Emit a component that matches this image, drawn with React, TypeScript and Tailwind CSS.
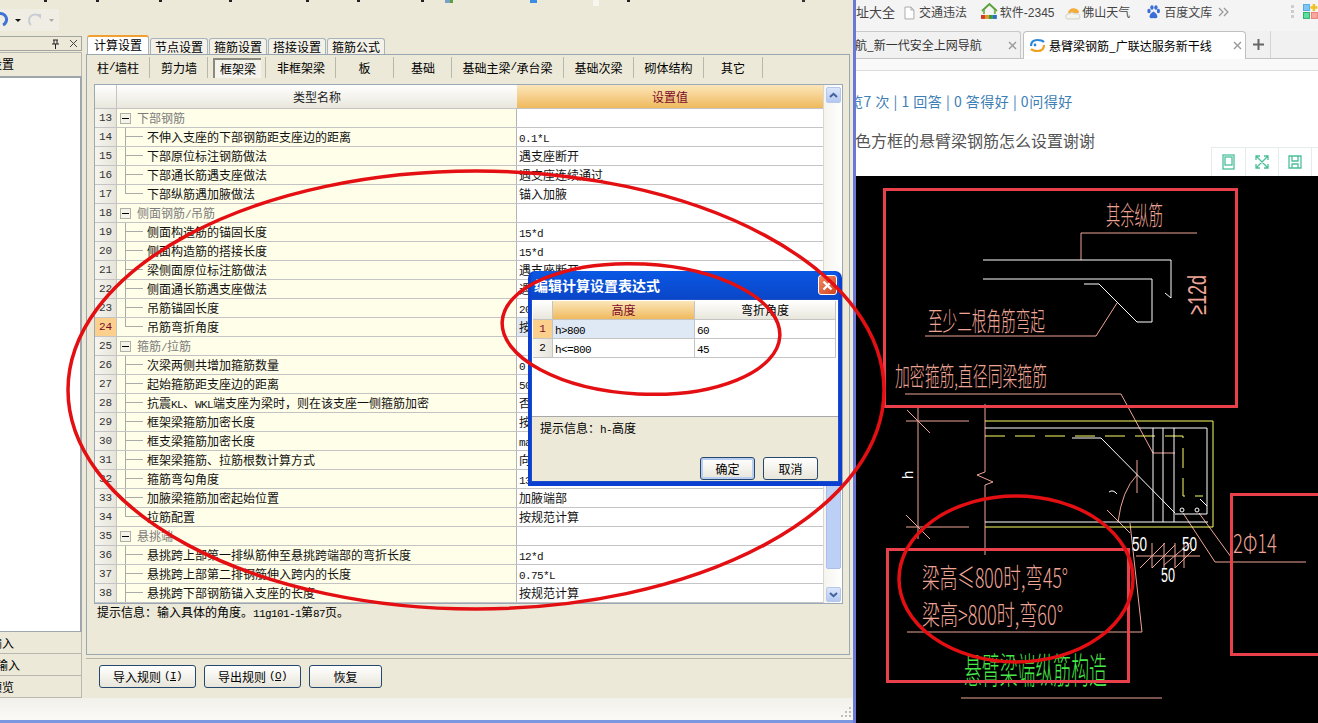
import React from "react";

type Row = [number, "g" | "c" | "l", string, string?];

const rows: Row[] = [
  [13, "g", "下部钢筋"],
  [14, "c", "不伸入支座的下部钢筋距支座边的距离", "0.1*L"],
  [15, "c", "下部原位标注钢筋做法", "遇支座断开"],
  [16, "c", "下部通长筋遇支座做法", "遇支座连续通过"],
  [17, "l", "下部纵筋遇加腋做法", "锚入加腋"],
  [18, "g", "侧面钢筋/吊筋"],
  [19, "c", "侧面构造筋的锚固长度", "15*d"],
  [20, "c", "侧面构造筋的搭接长度", "15*d"],
  [21, "c", "梁侧面原位标注筋做法", "遇支座断开"],
  [22, "c", "侧面通长筋遇支座做法", "遇支座连续通过"],
  [23, "c", "吊筋锚固长度", "20*d"],
  [24, "l", "吊筋弯折角度", "按规范计算"],
  [25, "g", "箍筋/拉筋"],
  [26, "c", "次梁两侧共增加箍筋数量", "0"],
  [27, "c", "起始箍筋距支座边的距离", "50"],
  [28, "c", "抗震KL、WKL端支座为梁时，则在该支座一侧箍筋加密", "否"],
  [29, "c", "框架梁箍筋加密长度", "按规范计算"],
  [30, "c", "框支梁箍筋加密长度", "max(hb,500)"],
  [31, "c", "框架梁箍筋、拉筋根数计算方式", "向上取整+1"],
  [32, "c", "箍筋弯勾角度", "135"],
  [33, "c", "加腋梁箍筋加密起始位置", "加腋端部"],
  [34, "l", "拉筋配置", "按规范计算"],
  [35, "g", "悬挑端"],
  [36, "c", "悬挑跨上部第一排纵筋伸至悬挑跨端部的弯折长度", "12*d"],
  [37, "c", "悬挑跨上部第二排钢筋伸入跨内的长度", "0.75*L"],
  [38, "c", "悬挑跨下部钢筋锚入支座的长度", "按规范计算"],
];

function mix(text: string) {
  return text.split(/([\x21-\x7e]+)/).map((part, i) =>
    /^[\x21-\x7e]+$/.test(part) ? (
      <span key={i} className="font-['Liberation_Mono',monospace] text-[11px] tracking-[-0.6px]">
        {part}
      </span>
    ) : (
      <span key={i}>{part}</span>
    )
  );
}

const ticks = ["ml-[44px]", "ml-[49px]", "ml-[60px]", "ml-[67px]", "ml-[74px]", "ml-[48px]", "ml-[61px]"];

function XpButton({ className, children }: { className: string; children: React.ReactNode }) {
  return (
    <div
      className={
        "h-[23px] rounded-[3px] border border-[#24486f] bg-gradient-to-b from-white to-[#e8e6da] flex items-center justify-center text-[12px] text-black " +
        className
      }
    >
      {children}
    </div>
  );
}

function Grid() {
  return (
    <div className="ml-[7px] mt-[6px] w-[749px] h-[520px] border border-[#9aa9b5] flex bg-white">
      <div className="w-[728px] flex flex-col">
        <div className="h-[24px] flex shrink-0 border-b border-[#c4c4c4] text-[12px]">
          <div className="w-[22px] bg-gradient-to-b from-white to-[#e9e7dc] border-r border-[#c4c4c4]" />
          <div className="w-[400px] bg-gradient-to-b from-white to-[#e9e7dc] flex items-center justify-center text-[#222]">类型名称</div>
          <div className="flex-1 bg-gradient-to-b from-[#fbe6b8] to-[#efb95b] flex items-center justify-center text-[#7a0a2a]">设置值</div>
        </div>
        {rows.map(([n, kind, name, value]) => (
          <div key={n} className="h-[19px] flex shrink-0 border-b border-[#c4c4c4] text-[12px] leading-[18px] text-[#111]">
            <div
              className={
                n === 24
                  ? "w-[22px] bg-[#fbd08c] border-r border-[#c4c4c4] text-center font-['Liberation_Mono',monospace] text-[11px] text-[#7a0a2a]"
                  : "w-[22px] bg-gradient-to-r from-[#f6f5ef] to-[#e6e4da] border-r border-[#c4c4c4] text-center font-['Liberation_Mono',monospace] text-[11px] text-[#333]"
              }
            >
              {n}
            </div>
            <div className="w-[400px] bg-[#fffee8] border-r border-[#b4b4b4] flex items-stretch whitespace-nowrap">
              {kind === "g" ? (
                <>
                  <div className="ml-[3px] mt-[4px] w-[11px] h-[11px] border border-[#b0b0a8] bg-[#f4f3ea] flex items-center justify-center shrink-0">
                    <div className="w-[7px] h-[1px] bg-black" />
                  </div>
                  <div className="ml-[6px] text-[#7c7c7c]">{mix(name)}</div>
                </>
              ) : (
                <>
                  <div className="ml-[8px] w-[18px] flex flex-col shrink-0">
                    <div className="h-[9px] border-l border-b border-[#aaa]" />
                    <div className={kind === "l" ? "flex-1" : "flex-1 border-l border-[#aaa]"} />
                  </div>
                  <div className="ml-[4px]">{mix(name)}</div>
                </>
              )}
            </div>
            <div className={n === 24 ? "flex-1 bg-[#dfe8f5] pl-[2px] whitespace-nowrap" : "flex-1 bg-white pl-[2px] whitespace-nowrap"}>
              {value ? mix(value) : null}
            </div>
          </div>
        ))}
      </div>
      <div className="w-[19px] border-l border-[#d8d8d0] bg-gradient-to-r from-[#f5f4ee] to-white flex flex-col items-center pt-[2px] pb-[1px]">
        <div className="w-[15px] h-[16px] rounded-[2px] border border-[#b6c7ea] bg-gradient-to-b from-[#dbe6fb] to-[#b4c8f0] flex items-center justify-center">
          <svg width="9" height="7" viewBox="0 0 9 7">
            <path d="M1 5 L4.5 1.8 L8 5" fill="none" stroke="#43609c" strokeWidth="2" />
          </svg>
        </div>
        <div className="flex-1 w-full" />
        <div className="w-[15px] h-[270px] rounded-[2px] border border-[#a9bfea] bg-[#bcd0f6]" />
        <div className="h-[18px]" />
        <div className="w-[15px] h-[15px] rounded-[2px] border border-[#b6c7ea] bg-gradient-to-b from-[#dbe6fb] to-[#b4c8f0] flex items-center justify-center">
          <svg width="9" height="7" viewBox="0 0 9 7">
            <path d="M1 2 L4.5 5.2 L8 2" fill="none" stroke="#43609c" strokeWidth="2" />
          </svg>
        </div>
      </div>
    </div>
  );
}

function LeftApp() {
  return (
    <div className="w-[853px] h-[723px] bg-[#ece9d8] flex flex-col shrink-0">
      <div className="h-[36px] shrink-0 flex flex-col">
        <div className="h-[3px] flex">
          {ticks.map((t) => (
            <div key={t} className={t + " w-[3px] h-[2px] bg-[#222]"} />
          ))}
          <div className="ml-[21px] w-[5px] h-[3px] bg-[#7aa0c8]" />
          <div className="w-[3px] h-[3px] bg-[#58a040]" />
          <div className="ml-[77px] w-[7px] h-[3px] bg-[#3a8de0]" />
          <div className="ml-[56px] w-[6px] h-[6px] bg-[#f6f5ee]" />
          <div className="ml-[28px] w-[3px] h-[2px] bg-[#222]" />
          <div className="ml-[172px] w-[3px] h-[2px] bg-[#333]" />
        </div>
        <div className="mt-[6px] w-[59px] h-[22px] bg-[#f0eee4] flex items-center">
          <svg width="58" height="22" viewBox="0 0 58 22">
            <path d="M-2 5 A 6 6 0 0 1 3 16" fill="none" stroke="#3f74d6" strokeWidth="3" />
            <path d="M15 10 h6 l-3 3 z" fill="#111" />
            <path d="M39 7 A 6 6 0 1 0 31 16" fill="none" stroke="#c9cdd3" strokeWidth="2" />
            <path d="M36 5 h5 v5 z" fill="#c9cdd3" />
            <path d="M49 10 h5 l-2.500 3 z" fill="#aaa" />
          </svg>
        </div>
      </div>
      <div className="flex-1 flex min-h-0">
        <div className="w-[82px] flex flex-col shrink-0 text-[12px] text-black overflow-hidden">
          <div className="h-[15px] border-t border-r border-b border-[#a4a4a0] flex items-center justify-end pr-[3px] gap-[9px]">
            <svg width="9" height="10" viewBox="0 0 9 10">
              <path d="M2 1 h5 M3 1 v4 M6 1 v4 M1 5 h7 M4.500 5 v5" stroke="#222" strokeWidth="1" fill="none" />
            </svg>
            <svg width="9" height="9" viewBox="0 0 9 9">
              <path d="M1 1 L8 8 M8 1 L1 8" stroke="#444" strokeWidth="1" />
            </svg>
          </div>
          <div className="mt-[1px] h-[24px] border-t border-r border-[#b8b8b0] flex items-center overflow-hidden">
            <span className="-ml-[10px] -mt-[1px] whitespace-nowrap">设置</span>
          </div>
          <div className="h-[556px] bg-white border-t-2 border-r-2 border-b border-[#9fa6ac]" />
          <div className="h-[22px] border-r border-b border-[#b8b8b0] flex items-center overflow-hidden">
            <span className="-ml-[10px] whitespace-nowrap">输入</span>
          </div>
          <div className="h-[22px] border-r border-b border-[#b8b8b0] flex items-center overflow-hidden">
            <span className="-ml-[4px] whitespace-nowrap">输入</span>
          </div>
          <div className="h-[22px] border-r border-b border-[#b8b8b0] flex items-center overflow-hidden">
            <span className="-ml-[10px] whitespace-nowrap">预览</span>
          </div>
        </div>
        <div className="ml-[4px] w-[765px] flex flex-col shrink-0 text-[12px] text-black">
          <div className="h-[18px] flex items-end pl-[1px] gap-[1px] shrink-0">
            <div className="w-[62px] h-[19px] bg-white border-t-2 border-t-[#f0a030] border-x border-x-[#a8b4bc] rounded-t-[3px] text-center leading-[15px]">计算设置</div>
            {["节点设置", "箍筋设置", "搭接设置", "箍筋公式"].map((t) => (
              <div key={t} className="w-[58px] h-[16px] bg-[#f3f1e8] border-t border-x border-[#a8b4bc] rounded-t-[3px] text-center leading-[16px]">
                {t}
              </div>
            ))}
          </div>
          <div className="w-[764px] h-[601px] border border-[#99a8b0] flex flex-col shrink-0">
            <div className="mt-[2px] h-[21px] pl-[5px] flex items-stretch shrink-0">
              <div className="w-[58px] border-r border-[#b8b8aa] flex items-center pl-[5px]">{mix("柱/墙柱")}</div>
              <div className="w-[58px] pl-[1px] border-r border-[#b8b8aa] flex items-center justify-center">剪力墙</div>
              <div className="w-[58px] pl-[1px] border-r border-[#b8b8aa] flex items-center justify-center">
                <div className="w-[48px] h-[20px] border-t-2 border-l-2 border-[#8a8a80] bg-[#f5f4ec] flex items-center justify-center">框架梁</div>
              </div>
              <div className="w-[70px] pl-[1px] border-r border-[#b8b8aa] flex items-center justify-center">非框架梁</div>
              <div className="w-[58px] border-r border-[#b8b8aa] flex items-center justify-center">板</div>
              <div className="w-[58px] pl-[1px] border-r border-[#b8b8aa] flex items-center justify-center">基础</div>
              <div className="w-[112px] border-r border-[#b8b8aa] flex items-center justify-center">{mix("基础主梁/承台梁")}</div>
              <div className="w-[70px] border-r border-[#b8b8aa] flex items-center justify-center">基础次梁</div>
              <div className="w-[70px] border-r border-[#b8b8aa] flex items-center justify-center">砌体结构</div>
              <div className="w-[59px] border-r border-[#b8b8aa] flex items-center justify-center">其它</div>
            </div>
            <Grid />
            <div className="ml-[10px] mt-[1px] leading-[14px]">{mix("提示信息：输入具体的角度。11g101-1第87页。")}</div>
          </div>
          <div className="mt-[3px] w-[766px] h-[41px] border-y border-[#b4b4a8] flex items-start pt-[6px] pl-[13px] gap-[8px] shrink-0">
            <XpButton className="w-[97px]">
              导入规则 <span className="font-['Liberation_Mono',monospace] text-[11px] tracking-[-0.6px] ml-[3px]">(<u>I</u>)</span>
            </XpButton>
            <XpButton className="w-[97px]">
              导出规则 <span className="font-['Liberation_Mono',monospace] text-[11px] tracking-[-0.6px] ml-[3px]">(<u>O</u>)</span>
            </XpButton>
            <XpButton className="w-[73px]">恢复</XpButton>
          </div>
        </div>
      </div>
      <div className="h-[22px] shrink-0 bg-gradient-to-b from-[#f1f0ea] to-[#fbfaf7] flex items-end justify-end pr-[1px] pb-[1px]">
        <svg width="12" height="12" viewBox="0 0 12 12" fill="#c2c0b6">
          <rect x="9" y="0" width="2" height="2" />
          <rect x="5" y="4" width="2" height="2" />
          <rect x="9" y="4" width="2" height="2" />
          <rect x="1" y="8" width="2" height="2" />
          <rect x="5" y="8" width="2" height="2" />
          <rect x="9" y="8" width="2" height="2" />
        </svg>
      </div>
      <div className="h-[3px] shrink-0 bg-[#7b97e0]" />
    </div>
  );
}

function Dialog() {
  return (
    <div className="absolute left-[528px] top-[271px] w-[314px] h-[215px] rounded-t-[7px] bg-[#0a3fd2] flex flex-col px-[3px] pb-[4px] text-[12px] text-black">
      <div className="h-[28px] shrink-0 flex items-center justify-between pl-[3px] pr-[2px] bg-gradient-to-b from-[#0a58e4] to-[#0a46c8] rounded-t-[6px]">
        <span className="text-[14px] font-bold text-white">编辑计算设置表达式</span>
        <div className="w-[19px] h-[20px] rounded-[3px] border border-white bg-gradient-to-br from-[#ee8a62] to-[#d2401c] flex items-center justify-center">
          <svg width="11" height="11" viewBox="0 0 11 11">
            <path d="M1.500 1.500 L9.500 9.500 M9.500 1.500 L1.500 9.500" stroke="#fff" strokeWidth="2.400" />
          </svg>
        </div>
      </div>
      <div className="flex-1 flex flex-col bg-[#ece9d8] border border-[#1d4fc4] min-h-0">
        <div className="h-[117px] bg-white border-b border-[#a8a8a8] pt-[1px] pl-[1px] shrink-0">
          <div className="w-[303px] border-r border-[#c4c4c4]">
            <div className="h-[19px] flex border-b border-[#c4c4c4]">
              <div className="w-[20px] bg-gradient-to-b from-white to-[#e9e7dc] border-r border-[#c4c4c4]" />
              <div className="w-[141px] bg-gradient-to-b from-[#fbe6b8] to-[#efb95b] text-[#7a0a2a] text-center leading-[18px]">高度</div>
              <div className="flex-1 bg-gradient-to-b from-white to-[#e9e7dc] text-center leading-[18px] border-l border-[#c4c4c4]">弯折角度</div>
            </div>
            <div className="h-[19px] flex border-b border-[#c4c4c4] leading-[18px]">
              <div className="w-[20px] bg-[#fbd08c] border-r border-[#c4c4c4] text-center font-['Liberation_Mono',monospace] text-[11px] text-[#7a0a2a]">1</div>
              <div className="w-[141px] bg-[#dfe8f5] pl-[2px]">{mix("h>800")}</div>
              <div className="flex-1 pl-[2px] border-l border-[#c4c4c4]">{mix("60")}</div>
            </div>
            <div className="h-[19px] flex border-b border-[#c4c4c4] leading-[18px]">
              <div className="w-[20px] bg-gradient-to-r from-[#f6f5ef] to-[#e6e4da] border-r border-[#c4c4c4] text-center font-['Liberation_Mono',monospace] text-[11px]">2</div>
              <div className="w-[141px] pl-[2px]">{mix("h<=800")}</div>
              <div className="flex-1 pl-[2px] border-l border-[#c4c4c4]">{mix("45")}</div>
            </div>
          </div>
        </div>
        <div className="pl-[8px] mt-[2px] leading-[17px]">{mix("提示信息：h-高度")}</div>
        <div className="mt-auto mb-[1px] flex justify-end gap-[8px] pr-[20px]">
          <XpButton className="w-[55px] border-[#1d3f80] shadow-[inset_0_0_0_2px_#b8cdf0]">确定</XpButton>
          <XpButton className="w-[55px]">取消</XpButton>
        </div>
      </div>
    </div>
  );
}

function Cad() {
  const sal = "#efa595";
  const red = "#e8414b";
  return (
    <svg viewBox="856 176 462 547" width="462" height="547" className="block bg-black" fontFamily="'Noto Sans CJK SC', sans-serif">
      <g fill="none" stroke={sal} strokeWidth="1">
        <path d="M1081 260 V233 H1197" />
        <path d="M925 336 H1096 L1117 303" />
        <path d="M905 394 H1121 L1153 453 H1175" />
        <path d="M907 410 L930 433 M906 421 H969 M918 407 V539 M906 527 H969 M906 515 L930 539" />
        <path d="M985 404 V472 L977 475 L993 482 L985 485 V555" />
        <path d="M1137 460 V493 M1118 522 Q1122 490 1137 475 M1130 523 L1142 632 H907 M1107 510 L1130 533" />
        <path d="M1136 556 H1200 M1152 543 V568 M1164 543 V568 M1175 543 V568 M1184 543 V568 M1140 568 L1165 543 M1152 568 L1175 545 M1164 565 L1190 543 M1175 568 L1195 548" />
        <path d="M1183 513 L1215 562 H1306 M1199 513 L1231 557" />
        <path d="M961 698 H1162" />
      </g>
      <g fill="none" stroke="#ffff66" strokeWidth="1">
        <path d="M985 421 H1213 V527 H985" />
        <path d="M985 436 H1183 V496 H1203" strokeDasharray="20 10" />
      </g>
      <g fill="none" stroke="#fff" strokeWidth="1">
        <path d="M983 260 H1171 V298 L1165 293" />
        <path d="M983 279 H1152 V322 H1137 L1099 284 H1084" />
        <path d="M985 428 H1207 V514 H1175 M1153 428 V522 M1163 428 V522 M1174 428 V522 M985 522 H1208" />
        <path d="M1072 438 H1101 L1175 513 M1200 499 L1207 506 M1109 492 Q1113 489 1117 494" />
        <circle cx="1182" cy="510" r="2" />
        <circle cx="1197" cy="510" r="2" />
      </g>
      <g fill={sal} fontWeight="300">
        <text x="1106" y="225" fontSize="26" textLength="57" lengthAdjust="spacingAndGlyphs">其余纵筋</text>
        <text x="928" y="331" fontSize="26" textLength="117" lengthAdjust="spacingAndGlyphs">至少二根角筋弯起</text>
        <text x="895" y="386" fontSize="26" textLength="152" lengthAdjust="spacingAndGlyphs">加密箍筋,直径同梁箍筋</text>
        <text transform="translate(1206 315) rotate(-90)" fontSize="26" fontFamily="'Liberation Sans', sans-serif" textLength="40" lengthAdjust="spacingAndGlyphs">≥12d</text>
        <text x="922" y="588" fontSize="27" textLength="146" lengthAdjust="spacingAndGlyphs">梁高≤800时,弯45°</text>
        <text x="922" y="625" fontSize="27" textLength="141" lengthAdjust="spacingAndGlyphs">梁高&gt;800时,弯60°</text>
        <text x="1233" y="553" fontSize="26" textLength="44" lengthAdjust="spacingAndGlyphs">2Φ14</text>
      </g>
      <g fill="#fff" fontWeight="300" fontFamily="'Liberation Sans', sans-serif">
        <text x="1132" y="551" fontSize="20" textLength="15" lengthAdjust="spacingAndGlyphs">50</text>
        <text x="1182" y="551" fontSize="20" textLength="15" lengthAdjust="spacingAndGlyphs">50</text>
        <text x="1161" y="582" fontSize="20" textLength="14" lengthAdjust="spacingAndGlyphs">50</text>
        <text transform="translate(913 479) rotate(-90)" fontSize="15">h</text>
      </g>
      <text x="964" y="684" fontSize="36" fontWeight="300" fill="#48e848" textLength="143" lengthAdjust="spacingAndGlyphs">悬臂梁端纵筋构造</text>
      <g fill="none" stroke={red} strokeWidth="3">
        <rect x="884.500" y="189.500" width="352" height="217" />
        <rect x="887.500" y="549.500" width="241" height="132" />
        <path d="M1320 494.500 H1231.500 V654.500 H1320" />
      </g>
    </svg>
  );
}

function Browser() {
  return (
    <div className="w-[462px] h-[723px] flex flex-col shrink-0 bg-white overflow-hidden text-[12px]">
      <div className="h-[31px] shrink-0 bg-[#f4f4f4] flex items-start pt-[3px] text-[#444] whitespace-nowrap">
        <span className="-ml-[13px] leading-[18px] text-[13px]">网址大全</span>
        <svg className="ml-[9px] mt-[3px]" width="11" height="14" viewBox="0 0 11 14">
          <path d="M1 1 H7 L10 4 V13 H1 Z M7 1 V4 H10" fill="#fff" stroke="#aaa" />
        </svg>
        <span className="ml-[4px] leading-[18px]">交通违法</span>
        <svg className="ml-[14px] -mt-[1px]" width="17" height="19" viewBox="0 0 17 19">
          <path d="M1 9 L8.500 2 L16 9" fill="none" stroke="#5aa03c" strokeWidth="2" />
          <path d="M3 8 V12 M14 8 V12" stroke="#7cb95c" strokeWidth="2" />
          <rect x="0" y="13" width="4" height="4" fill="#d23a2a" />
          <rect x="4" y="13" width="4" height="4" fill="#e09a20" />
          <rect x="8" y="13" width="4" height="4" fill="#3a9a40" />
          <rect x="12" y="13" width="4" height="4" fill="#2a70c0" />
        </svg>
        <span className="ml-[2px] leading-[18px]">软件<span className="font-['Liberation_Sans',sans-serif]">-2345</span></span>
        <svg className="ml-[10px]" width="17" height="18" viewBox="0 0 17 18">
          <path d="M3 10 A6 6 0 0 1 14 8 L14 10 Z" fill="#f5ad3a" />
          <path d="M1 15 Q0 11 4 11 Q7 8 10 11 Q15 10 15 14 Q15 16 13 16 H3 Q1 16 1 15 Z" fill="#f5f5f0" stroke="#ccc" />
        </svg>
        <span className="ml-[1px] leading-[18px]">佛山天气</span>
        <svg className="ml-[17px] mt-[2px]" width="13" height="14" viewBox="0 0 13 14" fill="#3b6fd8">
          <ellipse cx="2" cy="6" rx="1.700" ry="2.200" />
          <ellipse cx="5" cy="2.500" rx="1.700" ry="2.300" />
          <ellipse cx="9" cy="2.500" rx="1.700" ry="2.300" />
          <ellipse cx="11.500" cy="6" rx="1.600" ry="2.200" />
          <path d="M2.500 12 Q2.500 9 6.500 6.500 Q10.500 9 10.500 12 Q10 14 6.500 13 Q3 14 2.500 12 Z" />
        </svg>
        <span className="ml-[4px] leading-[18px]">百度文库</span>
        <svg className="ml-[6px] mt-[4px]" width="12" height="10" viewBox="0 0 12 10">
          <path d="M1 1 L5 5 L1 9 M6 1 L10 5 L6 9" fill="none" stroke="#999" strokeWidth="1.300" />
        </svg>
        <svg className="ml-[61px] mt-[2px]" width="3" height="14" viewBox="0 0 3 14" fill="#ccc">
          <rect y="0" width="3" height="3" />
          <rect y="5" width="3" height="3" />
          <rect y="10" width="3" height="3" />
        </svg>
        <svg className="ml-[9px] mt-[1px]" width="15" height="15" viewBox="0 0 15 15">
          <rect x="0.500" y="0.500" width="6" height="6" fill="#7ec8f8" stroke="#5aa8e0" />
          <path d="M11 0 V7 M7.500 3.500 H14.500" stroke="#f0c020" strokeWidth="2.500" />
          <rect x="0.500" y="8.500" width="6" height="6" fill="#5ce09a" stroke="#30b070" />
          <rect x="8.500" y="8.500" width="6" height="6" fill="#f8a8a0" stroke="#e88078" />
        </svg>
      </div>
      <div className="h-[28px] shrink-0 bg-[#f1f1f1] border-b border-[#c4c4c4] flex items-stretch whitespace-nowrap">
        <div className="w-[165px] shrink-0 border-r border-t border-[#c8c8c8] rounded-tr-[3px] flex items-center overflow-hidden text-[#333] relative">
          <span className="-ml-[1px]">航_新一代安全上网导航</span>
          <svg className="ml-[26px] shrink-0" width="9" height="9" viewBox="0 0 9 9">
            <path d="M1 1 L8 8 M8 1 L1 8" stroke="#999" strokeWidth="1.400" />
          </svg>
        </div>
        <div className="ml-[2px] w-[223px] shrink-0 h-[28px] bg-white border-x border-t border-[#c0c0c0] rounded-t-[4px] flex items-center pl-[5px] text-black">
          <svg width="17" height="15" viewBox="0 0 17 15">
            <path d="M2 8 Q2 2 8.500 2 Q13 2 15 4" fill="none" stroke="#2a86d8" strokeWidth="2.200" />
            <path d="M15 7 Q15 13 8.500 13 Q4 13 2 11" fill="none" stroke="#f0a020" strokeWidth="2.200" />
            <circle cx="6" cy="7" r="1.400" fill="#2a86d8" />
          </svg>
          <span className="ml-[3px]">悬臂梁钢筋_广联达服务新干线</span>
          <svg className="ml-[21px] shrink-0" width="9" height="9" viewBox="0 0 9 9">
            <path d="M1 1 L8 8 M8 1 L1 8" stroke="#999" strokeWidth="1.400" />
          </svg>
        </div>
        <div className="w-[25px] border-r border-[#d4d4d4] flex items-center justify-center">
          <svg width="11" height="11" viewBox="0 0 11 11">
            <path d="M5.500 0 V11 M0 5.500 H11" stroke="#666" strokeWidth="2" />
          </svg>
        </div>
      </div>
      <div className="h-[12px] shrink-0 bg-[#f9f9f9] border-b border-[#dedede]" />
      <div className="h-[105px] shrink-0 relative">
        <div className="-ml-[7px] mt-[20px] text-[14px] leading-[20px] tracking-[0.5px] text-[#3c7eb6] whitespace-nowrap">
          览7 次 | 1 回答 | 0 答得好 | 0问得好
        </div>
        <div className="-ml-[1px] mt-[18px] text-[16px] leading-[22px] text-[#555] whitespace-nowrap">色方框的悬臂梁钢筋怎么设置谢谢</div>
        <div className="absolute right-[-1px] top-[76px] w-[108px] h-[29px] border-t border-l border-[#e4ecec] flex">
          <div className="w-[34px] border-r border-[#e4ecec] flex items-center justify-center">
            <svg width="13" height="16" viewBox="0 0 13 16" fill="none" stroke="#4bbf9a" strokeWidth="1.300">
              <rect x="1" y="1" width="11" height="14" />
              <rect x="3" y="3" width="7" height="8" />
            </svg>
          </div>
          <div className="w-[33px] border-r border-[#e4ecec] flex items-center justify-center">
            <svg width="14" height="14" viewBox="0 0 14 14" fill="none" stroke="#4bbf9a" strokeWidth="1.300">
              <path d="M1 1 L13 13 M13 1 L1 13 M1 5 V1 H5 M9 1 H13 V5 M1 9 V13 H5 M9 13 H13 V9" />
            </svg>
          </div>
          <div className="w-[33px] border-r border-[#e4ecec] flex items-center justify-center">
            <svg width="14" height="14" viewBox="0 0 14 14" fill="none" stroke="#4bbf9a" strokeWidth="1.300">
              <path d="M1 1 H13 V13 H1 Z M4 1 V6 H10 V1 M4 13 V9 H10 V13" />
            </svg>
          </div>
        </div>
      </div>
      <Cad />
    </div>
  );
}

export default function App() {
  return (
    <div className="relative w-[1318px] h-[723px] overflow-hidden flex bg-white font-['Noto_Sans_CJK_SC','Liberation_Sans',sans-serif]">
      <LeftApp />
      <div className="w-[3px] h-[723px] bg-[#6b78d6] shrink-0" />
      <Browser />
      <Dialog />
      <svg className="absolute inset-0 pointer-events-none" width="1318" height="723" viewBox="0 0 1318 723" fill="none" stroke="#e30f12" strokeWidth="3.500">
        <ellipse cx="476" cy="390" rx="408" ry="219" />
        <ellipse cx="641" cy="329" rx="139" ry="65" transform="rotate(3 641 329)" />
        <ellipse cx="1016" cy="579" rx="117" ry="83" />
      </svg>
    </div>
  );
}
